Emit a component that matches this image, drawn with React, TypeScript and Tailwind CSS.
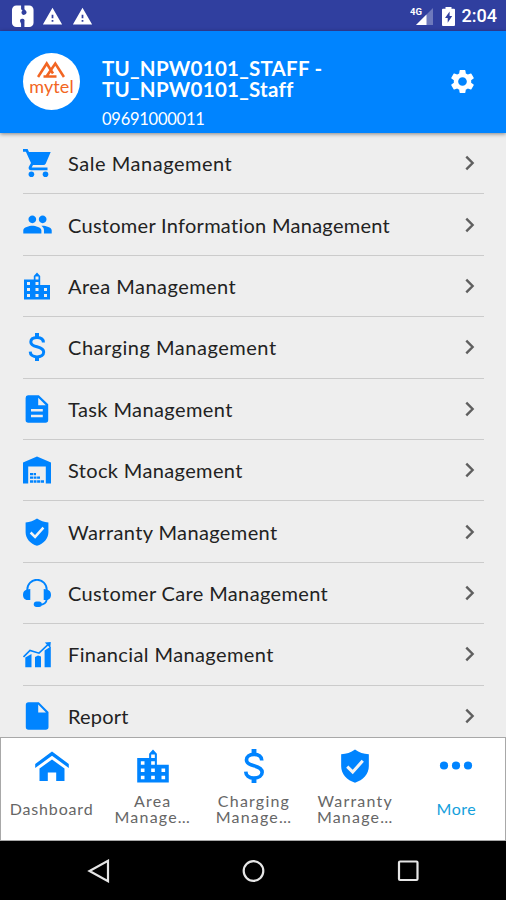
import type { ReactNode } from "react";
import { MdPeople, MdSettings, MdWarning } from "react-icons/md";

interface IconProps {
    className?: string;
}

const CartIcon = ({ className }: IconProps) => (
    <svg viewBox="0 0 28 28" className={className} fill="currentColor">
        <path d="M0 0h4.600L6 2.900h21.700L22.800 14.500a2.800 2.800 0 0 1-2.500 1.500H10l-1.300 2.500h15.800v2.700H8.200c-2.400 0-3.200-2-2.200-3.800l2-3.500L2.900 2.800H0z" />
        <circle cx="8.400" cy="25.200" r="2.800" />
        <circle cx="22.500" cy="25.200" r="2.800" />
    </svg>
);

const CityIcon = ({ className }: IconProps) => (
    <svg viewBox="0 0 28 28" className={className} fill="currentColor" fillRule="evenodd">
        <path d="M1 7.500h9.800V4L14 .5 17.200 4v9H27v14.500H1zM4 10v3h3v-3zM4 16v3h3v-3zM4 22v3h3v-3zM12.500 4.500v3h3v-3zM12.500 10v3h3v-3zM12.500 16v3h3v-3zM12.500 22v3h3v-3zM21 16v3h3v-3zM21 22v3h3v-3z" />
    </svg>
);

const DollarIcon = ({ className }: IconProps) => (
    <svg viewBox="0 0 28 28" className={className} fill="none" stroke="currentColor">
        <path d="M20.400 9.400c0-3-2.400-5-6.400-5-3.800 0-6.200 1.800-6.200 4.600 0 2.900 2.600 3.900 6.200 4.800 3.800 1 6.700 2.200 6.700 5.300 0 2.800-2.600 4.800-6.700 4.800-4.200 0-6.700-2.200-6.800-5.300" strokeWidth="3" />
        <path d="M14 0v4.500M14 23.500V28" strokeWidth="4" />
    </svg>
);

const TaskIcon = ({ className }: IconProps) => (
    <svg viewBox="0 0 28 28" className={className} fill="currentColor" fillRule="evenodd">
        <path d="M5 .3h10.800L25.200 9.200V25a2.700 2.700 0 0 1-2.700 2.700H5.300A2.700 2.700 0 0 1 2.600 25V3A2.700 2.700 0 0 1 5 .3zM15.200 2.700v7.500h7.600zM8 14v2.500h11.800V14zM8 19.700v2.500h11.800v-2.500z" />
    </svg>
);

const ReportIcon = ({ className }: IconProps) => (
    <svg viewBox="0 0 28 28" className={className} fill="currentColor" fillRule="evenodd">
        <path d="M5.500.3h10.300L25.500 10v15a2.700 2.700 0 0 1-2.700 2.700H5.500A2.700 2.700 0 0 1 2.800 25V3A2.700 2.700 0 0 1 5.500.3zM15.200 2.500v8h7.800z" />
    </svg>
);

const StockIcon = ({ className }: IconProps) => (
    <svg viewBox="0 0 28 28" className={className} fill="currentColor">
        <path d="M0 27.500V6.500L14 .5l14 6v21h-5.200V10.500H5.200v17z" />
        <path d="M7 17h3v2.300H7zM10.600 17H13v2.300h-2.400zM7 20.500h3v2.300H7zM10.600 20.500h2.900v2.300h-2.900zM14.100 20.500H17v2.300h-2.900zM7 24.200h3v2.600H7zM10.600 24.200h2.900v2.600h-2.900zM14.100 24.200H17v2.600h-2.900zM17.600 24.200H21v2.600h-3.400z" />
    </svg>
);

const ShieldIcon = ({ className }: IconProps) => (
    <svg viewBox="0 0 28 28" className={className}>
        <path d="M14 .4c3.500 2.500 7 3.600 11.400 4v9.800c0 6.500-4.800 11.400-11.400 13.600C7.400 25.600 2.600 20.700 2.600 14.200V4.400C7 4 10.500 2.900 14 .4z" fill="currentColor" />
        <path d="M7.600 14.500l4.500 4.400 8.300-9.200" fill="none" stroke="#f4f4f4" strokeWidth="2.500" />
    </svg>
);

const HeadsetIcon = ({ className }: IconProps) => (
    <svg viewBox="0 0 28 28" className={className} fill="currentColor">
        <path d="M4.300 12V10.500a9.700 9.700 0 0 1 19.400 0V20c0 3.500-3 5.700-7 5.700" fill="none" stroke="currentColor" strokeWidth="1.900" />
        <path d="M7.300 10v11H4.500C1.500 21 0 18.500 0 15.700S1.500 11 4 10.500zM20.700 10v11h2.800c3 0 4.500-2.500 4.500-5.300s-1.500-4.700-4-5.200z" />
        <rect x="10.800" y="22.600" width="8" height="5.400" rx="2.700" />
    </svg>
);

const FinanceIcon = ({ className }: IconProps) => (
    <svg viewBox="0 0 28 28" className={className} fill="currentColor">
        <path d="M2.300 17.500l6.200-3.500v13.300H2.300zM12 17l3-1.500 3 1v10.800h-6zM21.600 10.500l6.200-4v20.800h-6.200z" />
        <path d="M.5 17l6.500-6.500 9 2.700L26 3.700" fill="none" stroke="currentColor" strokeWidth="1.600" />
        <path d="M21.800 2.600L27.800 2 27.200 8z" />
    </svg>
);

const HomeIcon = ({ className }: IconProps) => (
    <svg viewBox="0 0 34 32" className={className} fill="currentColor">
        <path d="M17 1.500L33.800 14v4L17 5.800.2 18v-4z" />
        <path d="M17 9.500l12.500 9V31h-8.300v-8.500h-8.400V31H4.500V18.500z" />
    </svg>
);

const DotsIcon = ({ className }: IconProps) => (
    <svg viewBox="0 0 34 34" className={className} fill="currentColor">
        <circle cx="5" cy="16.500" r="4.100" />
        <circle cx="17" cy="16.500" r="4.100" />
        <circle cx="29" cy="16.500" r="4.100" />
    </svg>
);

const ChevronIcon = () => (
    <svg viewBox="0 0 10 16" className="mr-[9px] h-4 w-2.5" fill="none" stroke="#5f5f5f" strokeWidth="2.400">
        <path d="M1.300 1.700L7.600 8l-6.300 6.300" />
    </svg>
);

interface MenuItem {
    label: string;
    icon: ReactNode;
    tracking: string;
}

const menu: MenuItem[] = [
    { label: "Sale Management", icon: <CartIcon className="size-7" />, tracking: "tracking-[0.53px]" },
    { label: "Customer Information Management", icon: <MdPeople className="size-[31px] shrink-0" />, tracking: "tracking-[0.28px]" },
    { label: "Area Management", icon: <CityIcon className="size-7" />, tracking: "tracking-[0.46px]" },
    { label: "Charging Management", icon: <DollarIcon className="size-7" />, tracking: "tracking-[0.52px]" },
    { label: "Task Management", icon: <TaskIcon className="size-7" />, tracking: "tracking-[0.4px]" },
    { label: "Stock Management", icon: <StockIcon className="size-7" />, tracking: "tracking-[0.36px]" },
    { label: "Warranty Management", icon: <ShieldIcon className="size-7" />, tracking: "tracking-[0.38px]" },
    { label: "Customer Care Management", icon: <HeadsetIcon className="size-7" />, tracking: "tracking-[0.35px]" },
    { label: "Financial Management", icon: <FinanceIcon className="size-7" />, tracking: "tracking-[0.4px]" },
    { label: "Report", icon: <ReportIcon className="size-7" />, tracking: "tracking-[0.2px]" },
];

const tabs = [
    { label: "Dashboard", icon: <HomeIcon className="h-8 w-[34px]" />, text: "text-[#666] tracking-[0.85px]" },
    { label: "Area\nManage…", icon: <CityIcon className="size-[34px]" />, text: "text-[#666] tracking-[1.2px]" },
    { label: "Charging\nManage…", icon: <DollarIcon className="size-[34px]" />, text: "text-[#666] tracking-[1.2px]" },
    { label: "Warranty\nManage…", icon: <ShieldIcon className="size-[34px]" />, text: "text-[#666] tracking-[1.2px]" },
    { label: "More", icon: <DotsIcon className="size-[34px]" />, text: "text-[#14a0dc] tracking-[0.5px]" },
];

function StatusBar() {
    return (
        <div className="flex h-[31px] shrink-0 items-center bg-[#303f9f] pt-px text-white">
            <svg viewBox="0 0 24 24" className="ml-[11px] h-[23px] w-6">
                <rect x=".5" y=".5" width="22.500" height="22.500" rx="4.500" fill="#fff" />
                <path d="M10 0h3.500v4.500l1.500 1.500a2.600 2.600 0 1 1-4.500 2.500c-.3-1 .2-2 1-2.700L10 4.500zM10 24h3.500v-6.500a2.400 2.400 0 1 0-4.700-.8L10 19.500z" fill="#303f9f" />
            </svg>
            <MdWarning className="ml-[7px] size-[21px]" />
            <MdWarning className="ml-[9px] size-[21px]" />
            <div className="ml-auto flex items-center">
                <svg viewBox="0 0 24 20" className="h-5 w-6">
                    <path d="M23 2v17H6z" fill="#fff" fillOpacity=".3" />
                    <path d="M16.500 8.500V19H6z" fill="#fff" />
                    <text x="0" y="9" fontSize="9.500" fontWeight="700" fill="#fff" className="font-['Roboto',sans-serif]">4G</text>
                </svg>
                <svg viewBox="0 0 13 19" className="ml-2 h-[19px] w-[13px]">
                    <path d="M3.500 1.800V0h6v1.800H12a1 1 0 0 1 1 1V18a1 1 0 0 1-1 1H1a1 1 0 0 1-1-1V2.800a1 1 0 0 1 1-1z" fill="#fff" />
                    <path d="M7.600 4.500L3 11h2.700v4.800L10.200 9H7.600z" fill="#303f9f" />
                </svg>
                <span className="mr-[9px] ml-[7px] font-['Roboto',sans-serif] text-[18px] font-medium leading-5">2:04</span>
            </div>
        </div>
    );
}

function Header() {
    return (
        <header className="z-10 flex h-[102px] shrink-0 items-start bg-[#0084ff] pr-[29px] pl-[23px] text-white shadow-[0_1px_4px_rgba(0,0,0,0.45)]">
            <div className="mt-[22px] flex size-[57px] flex-col items-center rounded-full bg-white pt-2 text-[#f26522]">
                <svg viewBox="0 0 28 17" className="mr-px h-[17px] w-7" fill="none" stroke="currentColor" strokeWidth="2.600">
                    <path d="M1 16L9.700 2.500l6.300 10M6.500 15.500h13M9.500 15.500L18.300 2.500 27 16" />
                </svg>
                <span className="-mt-[3px] text-[18px] leading-[22px] tracking-[0.1px]">mytel</span>
            </div>
            <div className="ml-[22px] pt-[27px]">
                <p className="text-[20.500px] font-bold leading-[21px] tracking-[0.25px] whitespace-pre-line">{"TU_NPW0101_STAFF -\nTU_NPW0101_Staff"}</p>
                <p className="mt-[9px] text-[16.500px] leading-5 tracking-[-0.25px]">09691000011</p>
            </div>
            <MdSettings className="mt-9 ml-auto size-[29px]" />
        </header>
    );
}

export default function App() {
    return (
        <div className="flex h-[900px] w-[506px] flex-col overflow-hidden bg-[#eee] font-['Lato',sans-serif]">
            <StatusBar />
            <Header />
            <main className="min-h-0 flex-1 overflow-hidden pr-[22px] pl-[23px]">
                {menu.map((item) => (
                    <div key={item.label} className="flex h-[61.4px] items-center border-b-[1.500px] border-[#cbcbcb] text-[#0084ff]">
                        <span className="flex size-7 items-center justify-center">{item.icon}</span>
                        <span className={`ml-[17px] flex-1 text-[20px] whitespace-nowrap text-[#222] ${item.tracking}`}>{item.label}</span>
                        <ChevronIcon />
                    </div>
                ))}
            </main>
            <nav className="grid h-[104px] shrink-0 grid-cols-[repeat(5,101.2px)] border border-[#a8a8a8] bg-white">
                {tabs.map((tab) => (
                    <div key={tab.label} className="flex flex-col items-center pt-[11px] text-[#0084ff]">
                        <span className="flex h-[34px] items-center">{tab.icon}</span>
                        <span className={`flex h-[51px] items-center text-center text-[16px] leading-4 whitespace-pre-line ${tab.text}`}>{tab.label}</span>
                    </div>
                ))}
            </nav>
            <div className="flex h-[59px] shrink-0 items-center justify-between bg-black px-[86px]">
                <svg viewBox="0 0 24 24" className="size-6" fill="none" stroke="#e6e6e6" strokeWidth="2.200">
                    <path d="M22 1.800v20.400L3.500 12z" />
                </svg>
                <svg viewBox="0 0 24 24" className="size-6" fill="none" stroke="#e6e6e6" strokeWidth="2.200">
                    <circle cx="12.500" cy="12" r="9.800" />
                </svg>
                <svg viewBox="0 0 24 24" className="size-6" fill="none" stroke="#e6e6e6" strokeWidth="2.200">
                    <rect x="3" y="2.500" width="18.500" height="18.500" rx="1" />
                </svg>
            </div>
        </div>
    );
}
